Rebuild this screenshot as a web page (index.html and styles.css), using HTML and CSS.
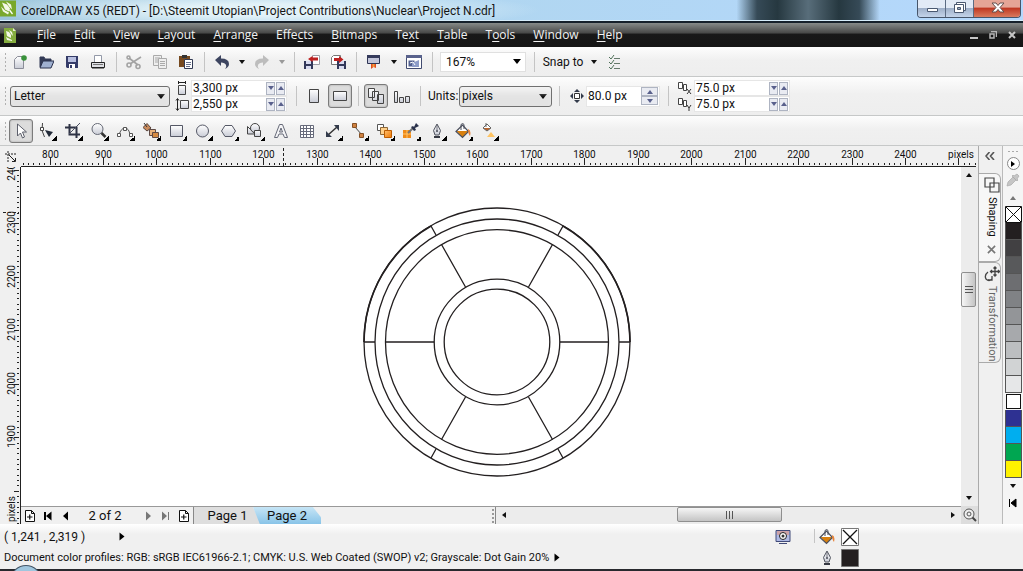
FILE: index.html
```html
<!DOCTYPE html>
<html lang="en">
<head>
<meta charset="utf-8">
<title>CorelDRAW X5</title>
<link rel="stylesheet" href="styles.css">
</head>
<body>
<svg class="defs" aria-hidden="true">
  <defs>
    <linearGradient id="steel" x1="0" y1="0" x2="0" y2="1"><stop offset="0" stop-color="#fff"/><stop offset="1" stop-color="#c9ccd6"/></linearGradient>
    <linearGradient id="orange" x1="0" y1="0" x2="1" y2="1"><stop offset="0" stop-color="#ffc070"/><stop offset="1" stop-color="#f07800"/></linearGradient>
    <symbol id="logo" viewBox="0 0 16 16"><path d="M0 0h16v16H0z" fill="#79a82c"/><path d="M2 2l5 2 3 4-1 3-4-2zM6 1l5 3 1 5-3-3zM1 6l4 4 4 2-1 2-5-3z" fill="#f4f8e8"/><path d="M10 9l3 4-1 1-3-4z" fill="#fff"/></symbol>
    <symbol id="bucket" viewBox="0 0 16 16"><path d="M1 8.500L7.500 2l6 6.500-6 6z" fill="#fff"/><path d="M1.500 8h12l-6 6.500z" fill="#d8800f"/><path d="M1 8.500L7.500 2l6 6.500-6 6z" fill="none" stroke="#4b4f5c" stroke-width="1.200"/><path d="M6 7V1.500q2-2 3 0V6" fill="none" stroke="#4b4f5c"/><path d="M13 6q3.500 1 2 7-2-2-2-7" fill="#e9843a"/></symbol>
    <symbol id="pen" viewBox="0 0 16 16"><path d="M8 1L4.500 7.500 6 12h4l1.500-4.500z" fill="url(#steel)" stroke="#50545f"/><path d="M8 2v5" stroke="#50545f" stroke-width=".8"/><circle cx="8" cy="8" r="1" fill="#454955"/><path d="M5 13h6v2H5z" fill="#363943"/></symbol>
    <symbol id="addpage" viewBox="0 0 10 12"><path d="M.5.500h6l3 3v8h-9zM6.500.500v3h3" fill="#fff" stroke="#111"/><path d="M2 7h5.500M4.750 4.500v5" stroke="#111" stroke-width="1.200"/></symbol>
  </defs>
</svg>

<header class="titlebar">
  <svg class="app-logo" aria-hidden="true"><use href="#logo"/></svg>
  <h1 class="title">CorelDRAW X5 (REDT) - [D:\Steemit Utopian\Project Contributions\Nuclear\Project N.cdr]</h1>
  <div class="window-buttons">
    <button class="wbtn" aria-label="Minimize"><svg viewBox="0 0 28 17"><path d="M9.500 8.500h10v3h-10z" fill="#fff" stroke="#4a5870"/></svg></button>
    <button class="wbtn" aria-label="Restore"><svg viewBox="0 0 28 17"><path d="M10.500 2.500h9v8h-9z" fill="#fff" stroke="#4a5870"/><path d="M8.500 4.500h9v8h-9z" fill="#fff" stroke="#4a5870"/><path d="M11.500 7.500h3v2h-3z" fill="#9aabc2" stroke="#4a5870"/></svg></button>
    <button class="wbtn close" aria-label="Close"><svg viewBox="0 0 46 17"><path d="M18 3h4l2 2.500L26 3h4l-4 4.500 4 4.500h-4l-2-2.500-2 2.500h-4l4-4.500z" fill="#fff" stroke="#64504f"/></svg></button>
  </div>
</header>

<nav class="menubar">
  <svg class="doc-logo" viewBox="0 0 12 15" aria-hidden="true"><path d="M0 0h9l3 3v12H0z" fill="#84ac3e"/><path d="M2 3l3 1 2 3v3L3 8zM5 2l3 2 1 4-2-2zM2 9l6 3v1l-5-1z" fill="#f4f8e8"/><path d="M9 0v3h3z" fill="#e5efcf"/></svg>
  <div class="menus">
    <button><u>F</u>ile</button><button><u>E</u>dit</button><button><u>V</u>iew</button><button><u>L</u>ayout</button><button><u>A</u>rrange</button><button>Effe<u>c</u>ts</button><button><u>B</u>itmaps</button><button>Te<u>x</u>t</button><button><u>T</u>able</button><button>T<u>o</u>ols</button><button><u>W</u>indow</button><button><u>H</u>elp</button>
  </div>
  <div class="doc-buttons">
    <button aria-label="Minimize document"><svg viewBox="0 0 8 8"><path d="M0 6h8v2H0z" fill="#c6c6c6"/></svg></button>
    <button aria-label="Restore document"><svg viewBox="0 0 8 8"><path d="M2 .5h5.500V6M1 3h4v4H1z" fill="none" stroke="#b5b5b5" stroke-width="1.500"/></svg></button>
    <button aria-label="Close document"><svg viewBox="0 0 8 8"><path d="M1 1l6 6M7 1L1 7" stroke="#c6c6c6" stroke-width="2"/></svg></button>
  </div>
</nav>

<div class="bar standard" role="toolbar" aria-label="Standard">
  <i class="grip"></i>
  <button class="tool" aria-label="New"><svg viewBox="0 0 16 16"><path d="M2.500 5.500l3-3h6v12h-9z" fill="url(#steel)" stroke="#8b8d98"/><circle cx="12" cy="4" r="2.800" fill="#38913a"/></svg></button>
  <button class="tool" aria-label="Open"><svg viewBox="0 0 16 16"><path d="M2 13V3h4l1 2h6v3" fill="#333b56" stroke="#333b56"/><path d="M2 14l3-7h11l-3 7z" fill="#9fb0d0" stroke="#29304c"/></svg></button>
  <button class="tool" aria-label="Save"><svg viewBox="0 0 16 16"><path d="M2 2h12v12H3l-1-1z" fill="#343b68"/><path d="M4 3h8v5H4z" fill="#b8bfe0"/><path d="M5 10h6v4H5z" fill="#fff"/><path d="M6 11h2v3H6z" fill="#343b68"/></svg></button>
  <button class="tool" aria-label="Print"><svg viewBox="0 0 16 16"><path d="M4.500 9V1.500h7V9" fill="#fff" stroke="#9399a8"/><path d="M1.500 8.500h13v5h-13z" fill="#dfe0e5" stroke="#222"/><path d="M2 13h12v1.500H2z" fill="#222"/><path d="M3 10.500h10" stroke="#777"/></svg></button>
  <i class="sep"></i>
  <button class="tool" aria-label="Cut"><svg viewBox="0 0 16 16"><g fill="none" stroke="#a3a3a3" stroke-width="1.600"><path d="M3 4l9 7M15 3L4 10"/><circle cx="3" cy="11" r="2"/><circle cx="12" cy="12.500" r="2"/><circle cx="2.500" cy="3.500" r="1.500"/></g></svg></button>
  <button class="tool" aria-label="Copy"><svg viewBox="0 0 16 16"><path d="M1.500 1.500h8v10h-8zM3 4h5M3 6h3M3 8h3" fill="#eee" stroke="#aaa"/><path d="M6.500 4.500h8v10h-8zM8 7.500h5M8 9.500h5M8 11.500h5" fill="#eee" stroke="#aaa"/></svg></button>
  <button class="tool" aria-label="Paste"><svg viewBox="0 0 16 16"><path d="M1 2h11v11H1z" fill="#76491f"/><path d="M4 1h5v3H4z" fill="#333"/><path d="M6.500 5.500h8v9h-8z" fill="#fff" stroke="#333b55"/><path d="M8 8.500h5M8 10.500h5M8 12.500h4" stroke="#68708c"/></svg></button>
  <i class="sep"></i>
  <button class="tool" aria-label="Undo"><svg viewBox="0 0 16 16"><path d="M1 6l6-5v3.500q8 0 8 5.500 0 3-4 5 2-2 1-4-1-2.500-5-2.500V12z" fill="#3d4560"/></svg></button>
  <button class="drop" aria-label="Undo list"></button>
  <button class="tool" aria-label="Redo"><svg viewBox="0 0 16 16"><path d="M15 6L9 1v3.500q-8 0-8 5.500 0 3 4 5-2-2-1-4 1-2.500 5-2.500V12z" fill="#bdbdbd"/></svg></button>
  <button class="drop dim" aria-label="Redo list"></button>
  <i class="sep"></i>
  <button class="tool" aria-label="Import"><svg viewBox="0 0 16 16"><path d="M8.500 1.500h7v9h-7z" fill="#fff" stroke="#a0a0a8"/><path d="M0 7h9v8H0z" fill="#33395a"/><path d="M2 7h5v3H2zM2 12h5v3H2z" fill="#d9dcf0"/><path d="M14 3.500H8.500V2L4 5l4.500 3V6.500H14z" fill="#bd2020"/></svg></button>
  <button class="tool" aria-label="Export"><svg viewBox="0 0 16 16"><path d="M1.500 3.500l2-2h7v9h-9z" fill="#fff" stroke="#777"/><path d="M7 7h9v8H7z" fill="#33395a"/><path d="M9 7h5v3H9zM9 12h5v3H9z" fill="#d9dcf0"/><path d="M4 4h5V2l4.500 3.500L9 9V7H4z" fill="#bd2020"/></svg></button>
  <i class="sep"></i>
  <button class="tool" aria-label="Application launcher"><svg viewBox="0 0 16 16"><path d="M1.500 1.500h12v8h-12z" fill="#c3c6da" stroke="#2e3554"/><path d="M1 1h13v3H1z" fill="#353b5c"/><path d="M5 10h5v4l-2.500-1L5 15z" fill="#e04d20"/><path d="M6.500 10h2v3h-2z" fill="#f5a040"/></svg></button>
  <button class="drop" aria-label="Launcher list"></button>
  <button class="tool" aria-label="Welcome screen"><svg viewBox="0 0 16 16"><path d="M.5 1.500h15v13H.5z" fill="#fff" stroke="#414b70"/><path d="M0 1h16v3H0z" fill="#59628c"/><path d="M2.500 6.500h6v6h-6z" fill="#52608f"/><path d="M6 9l7-3v7H6z" fill="#8d9cc8"/><path d="M4 9l3-1 2 3" fill="none" stroke="#fff"/></svg></button>
  <i class="sep"></i>
  <select class="zoom" aria-label="Zoom level"><option>167%</option></select>
  <i class="sep"></i>
  <button class="snap">Snap to</button>
  <button class="drop" aria-label="Snap list"></button>
  <button class="tool options" aria-label="Options"><svg viewBox="0 0 16 16"><path d="M2 3l2 2 3-4M2 8l2 2 3-4M2 13l2 2 3-4" fill="none" stroke="#4d7057"/><path d="M7 4.500h6M7 9.500h6M7 14.500h6" stroke="#667a6c"/></svg></button>
</div>

<div class="bar property" role="toolbar" aria-label="Property bar">
  <i class="grip"></i>
  <select class="boxed paper" aria-label="Paper type"><option>Letter</option></select>
  <div class="pair size">
    <svg viewBox="0 0 14 14"><path d="M3.500 4.500h7v9h-7z" fill="url(#steel)" stroke="#444"/><path d="M3 1.500h8M3.500 0v3M10.500 0v3" stroke="#222"/></svg>
    <div class="field"><input aria-label="Page width" value="3,300 px"><button class="down" aria-label="Decrease width"></button><button class="up" aria-label="Increase width"></button></div>
    <svg viewBox="0 0 14 14"><path d="M5.500 3.500h8v8h-8z" fill="url(#steel)" stroke="#444"/><path d="M2.500 2v11M1 3.500l1.500-2L4 3.500M1 11.500l1.500 2 1.500-2" fill="none" stroke="#222"/></svg>
    <div class="field"><input aria-label="Page height" value="2,550 px"><button class="down" aria-label="Decrease height"></button><button class="up" aria-label="Increase height"></button></div>
  </div>
  <i class="sep"></i>
  <button class="tool" aria-label="Portrait"><svg viewBox="0 0 16 16"><path d="M3.500 1.500h9v13h-9z" fill="url(#steel)" stroke="#444"/></svg></button>
  <button class="tool on" aria-label="Landscape"><svg viewBox="0 0 16 16"><path d="M1.500 3.500h13v9h-13z" fill="url(#steel)" stroke="#444"/></svg></button>
  <i class="sep"></i>
  <button class="tool on" aria-label="All pages"><svg viewBox="0 0 16 16"><g fill="url(#steel)" stroke="#444"><path d="M.5.500h6v9h-6zM4.500 3.500h6v9h-6zM9.500 6.500h6v9h-6z"/></g></svg></button>
  <button class="tool" aria-label="Current page"><svg viewBox="0 0 16 16"><g fill="url(#steel)" stroke="#444"><path d="M.5 3.500h3v11h-3zM5.500 9.500h4v5h-4zM11.500 8.500h4v6h-4z"/></g></svg></button>
  <i class="sep"></i>
  <label class="units-label" for="units">Units:</label>
  <select class="boxed units" id="units"><option>pixels</option></select>
  <i class="sep"></i>
  <div class="nudge">
    <svg viewBox="0 0 14 14"><path d="M4.500 4.500h5v5h-5z" fill="#fff" stroke="#333"/><path d="M7 0l3 3H4zM7 14l3-3H4zM0 7l3-3v6zM14 7l-3-3v6z" fill="#333b4b"/></svg>
    <div class="field"><input aria-label="Nudge distance" value="80.0 px"><span class="stack"><button class="up" aria-label="Increase nudge"></button><button class="down" aria-label="Decrease nudge"></button></span></div>
  </div>
  <i class="sep"></i>
  <div class="pair duplicate">
    <svg viewBox="0 0 14 14"><path d="M.5 1.500h4v6h-4zM5.500 3.500h3v6h-3z" fill="#fff" stroke="#444"/><path d="M9 8l4 5M13 8l-4 5" stroke="#333"/></svg>
    <div class="field"><input aria-label="Duplicate distance X" value="75.0 px"><button class="down" aria-label="Decrease X"></button><button class="up" aria-label="Increase X"></button></div>
    <svg viewBox="0 0 14 14"><path d="M.5 1.500h4v6h-4zM5.500 3.500h3v6h-3z" fill="#fff" stroke="#444"/><path d="M9 8l2 3 2-3M11 11v3" fill="none" stroke="#333"/></svg>
    <div class="field"><input aria-label="Duplicate distance Y" value="75.0 px"><button class="down" aria-label="Decrease Y"></button><button class="up" aria-label="Increase Y"></button></div>
  </div>
</div>

<div class="bar toolbox" role="toolbar" aria-label="Toolbox">
  <i class="grip"></i>
  <button class="tool on" aria-label="Pick"><svg viewBox="0 0 16 16"><path d="M4.500 1v12l3-3 2 5 2-1-2-5h4z" fill="#fff" stroke="#5d606c"/></svg></button>
  <button class="tool fly" aria-label="Shape"><svg viewBox="0 0 16 16"><path d="M3.500 0q-2 8 2 14" fill="none" stroke="#444"/><path d="M1.500 4.500h3v3h-3z" fill="#fff" stroke="#444"/><path d="M6 7l8 2-4 5z" fill="#222a38"/></svg></button>
  <button class="tool fly" aria-label="Crop"><svg viewBox="0 0 16 16"><path d="M4.500 1v10.500H15M0 4.500h11.500V15" fill="none" stroke="#2e3345" stroke-width="2"/><path d="M15 0L4 11" stroke="#4a4f60"/></svg></button>
  <button class="tool fly" aria-label="Zoom"><svg viewBox="0 0 16 16"><circle cx="6.500" cy="6" r="5.500" fill="url(#steel)" stroke="#666a76"/><path d="M10.500 10l4 4" stroke="#333" stroke-width="2.500"/></svg></button>
  <button class="tool fly" aria-label="Freehand"><svg viewBox="0 0 16 16"><path d="M2 12Q4 5 8 5t5 7" fill="none" stroke="#555"/><path d="M.5 10.500h3v3h-3zM6.500 4.500h3v3h-3zM12.500 10.500h3v3h-3z" fill="#fff" stroke="#555"/></svg></button>
  <button class="tool fly" aria-label="Smart fill"><svg viewBox="0 0 16 16"><path d="M6.500 6.500h6v6h-6z" fill="#e9b27c" stroke="#5f4a45"/><path d="M9.500 9.500h6v5h-6z" fill="#d58a42" stroke="#5f4a45"/><path d="M0 4.500l4-4 4 4.500-4 3z" fill="#c98a5b" stroke="#59443d"/><path d="M1 0l3 4" stroke="#333"/></svg></button>
  <button class="tool fly" aria-label="Rectangle"><svg viewBox="0 0 16 16"><path d="M1.500 2.500h12v11h-12z" fill="url(#steel)" stroke="#555866"/></svg></button>
  <button class="tool fly" aria-label="Ellipse"><svg viewBox="0 0 16 16"><circle cx="7.500" cy="8" r="6" fill="url(#steel)" stroke="#555866"/></svg></button>
  <button class="tool fly" aria-label="Polygon"><svg viewBox="0 0 16 16"><path d="M4 2.500h7L14.500 8 11 13.500H4L.5 8z" fill="url(#steel)" stroke="#555866"/></svg></button>
  <button class="tool fly" aria-label="Basic shapes"><svg viewBox="0 0 16 16"><g fill="url(#steel)" stroke="#444"><path d="M.5 3.500L8 11H.5z"/><circle cx="8" cy="5" r="4.500"/><path d="M7.500 7.500h6v6h-6z"/></g></svg></button>
  <button class="tool" aria-label="Text"><svg viewBox="0 0 16 16"><path d="M6.500 1.500h3l5 13h-3L10 11H6l-1.500 3.500h-3zM8 5L6.500 9h3z" fill="#f4f4f6" stroke="#666a78"/></svg></button>
  <button class="tool" aria-label="Table"><svg viewBox="0 0 16 16"><path d="M1.500 2.500h13v12h-13zM1.500 5.500h13M1.500 8.500h13M1.500 11.500h13M4.500 2.500v12M7.500 2.500v12M11.500 2.500v12" fill="#fff" stroke="#676b7b"/></svg></button>
  <button class="tool fly" aria-label="Dimension"><svg viewBox="0 0 16 16"><path d="M3 12l9-8" stroke="#333" stroke-width="1.500"/><path d="M1 8l6 6H1zM9 2h5v6z" fill="#333b4b"/></svg></button>
  <button class="tool fly" aria-label="Connector"><svg viewBox="0 0 16 16"><path d="M4 4l7 8" stroke="#444"/><path d="M1.500.500h4v4h-4zM8.500 10.500h4v4h-4z" fill="#cf8140" stroke="#855125"/></svg></button>
  <button class="tool fly" aria-label="Blend"><svg viewBox="0 0 16 16"><path d="M.5 1.500h6v6h-6z" fill="#fff" stroke="#555"/><path d="M3.500 4.500h7v7h-7z" fill="#ffd08a" stroke="#8d6737"/><path d="M7.500 7.500h7v7h-7z" fill="url(#orange)" stroke="#bd5c00"/></svg></button>
  <button class="tool fly" aria-label="Eyedropper"><svg viewBox="0 0 16 16"><path d="M0 7h8v8H0z" fill="#ef8b19"/><path d="M4 7v8M0 11h8" stroke="#ffc36b"/><path d="M5 10l5-5" stroke="#777" stroke-width="2"/><path d="M8 4l2-1 1 1 2-4 3 3-4 2 1 2-2 1z" fill="#29304a"/></svg></button>
  <button class="tool fly" aria-label="Outline pen"><svg viewBox="0 0 16 16"><use href="#pen"/></svg></button>
  <button class="tool fly" aria-label="Fill"><svg viewBox="0 0 16 16"><use href="#bucket"/></svg></button>
  <button class="tool fly" aria-label="Interactive fill"><svg viewBox="0 0 16 16"><path d="M2 5l4-4 4 4-4 3z" fill="#fff"/><path d="M2 5h8L6 8z" fill="#b9652e"/><path d="M2 5l4-4 4 4-4 3zM5 4V0" fill="none" stroke="#666"/><path d="M10 9l4 5H6z" fill="#ffc463"/></svg></button>
</div>

<main class="workspace">
  <section class="document">
    <div class="origin"><svg viewBox="0 0 12 12"><path d="M3 0v12M0 3h12" stroke="#222" stroke-dasharray="2 1"/><path d="M4 4l6 6M7 10.500h3.500V7" fill="none" stroke="#222"/></svg></div>
    <svg class="ruler-x" id="ruler-x" aria-label="Horizontal ruler"></svg>
    <svg class="ruler-y" id="ruler-y" aria-label="Vertical ruler"></svg>
    <div class="canvas">
      <svg class="drawing" viewBox="-135 -135 270 270" aria-label="Concentric wheel drawing">
        <g fill="none" stroke="#231f20" stroke-width="1.300">
          <ellipse rx="133" ry="134"/><ellipse rx="122" ry="123"/><ellipse rx="111.500" ry="112.300"/><circle r="62.800"/><circle r="52.800"/>
          <path d="M-133 0h11M122 0h11M-111.500 0h48.700M62.800 0h48.700M-66 -116l5 9M66-116l-5 9M-66 116l5-9M66 116l-5-9M-55.500-97.500l24 42.500M55.500-97.500l-24 42.500M-55.500 97.500l24-42.500M55.500 97.500l-24-42.500"/>
        </g>
        <path d="M-133 0A133 134 0 0 1-66-116M66-116A133 134 0 0 1 133 0" fill="none" stroke="#231f20" stroke-width="1.700"/>
      </svg>
    </div>
    <div class="vscroll">
      <button class="tri n" aria-label="Scroll up"></button>
      <div class="track"><div class="thumb"></div></div>
      <button class="tri s" aria-label="Scroll down"></button>
    </div>
    <div class="pagebar">
      <div class="pages">
        <button class="nav" aria-label="Add page before"><svg viewBox="0 0 10 12"><use href="#addpage"/></svg></button>
        <button class="nav" aria-label="First page"><svg viewBox="0 0 10 12"><path d="M1 2h2v8H1zM8.500 1.500v9L3 6z" fill="#000"/></svg></button>
        <button class="nav" aria-label="Previous page"><svg viewBox="0 0 10 12"><path d="M7 1.500v9L2 6z" fill="#000"/></svg></button>
        <span class="count">2 of 2</span>
        <button class="nav" aria-label="Next page"><svg viewBox="0 0 10 12"><path d="M3 1.500v9L8 6z" fill="#777"/></svg></button>
        <button class="nav" aria-label="Last page"><svg viewBox="0 0 10 12"><path d="M1 1.500v9L6 6zM7 2h1v8H7z" fill="#777"/></svg></button>
        <button class="nav" aria-label="Add page after"><svg viewBox="0 0 10 12"><use href="#addpage"/></svg></button>
        <button class="page first">Page 1</button><button class="page active">Page 2</button>
      </div>
      <i class="splitter"></i>
      <div class="hscroll">
        <button class="tri w" aria-label="Scroll left"></button>
        <div class="track"><div class="thumb"></div></div>
        <button class="tri e" aria-label="Scroll right"></button>
      </div>
    </div>
    <button class="navigator" aria-label="Navigator"><svg viewBox="0 0 14 14"><circle cx="6" cy="6" r="5" fill="#eee" stroke="#555"/><circle cx="6" cy="6" r="2" fill="none" stroke="#555"/><path d="M9.500 9.500L13 13" stroke="#444" stroke-width="2"/></svg></button>
  </section>

  <aside class="docker">
    <button class="collapse" aria-label="Collapse dockers"><svg viewBox="0 0 10 8"><path d="M4.500 0l-3.500 4 3.500 4M9 0L5.500 4 9 8" fill="none" stroke="#555" stroke-width="1.600"/></svg></button>
    <button class="tab shaping"><svg viewBox="0 0 16 16"><path d="M1 1h9v9H1zM6 6h9v9H6z" fill="none" stroke="#444" stroke-width="1.200"/></svg><span>Shaping</span><svg class="x" viewBox="0 0 10 10"><path d="M1 1l8 8M9 1L1 9" stroke="#777" stroke-width="1.800"/></svg></button>
    <button class="tab transformation"><svg viewBox="0 0 16 16"><path d="M4 6q-4 3-2 7 3 3 6 0M8 10v4H4M11 1v9M6.500 5.500h9M9.500 2.500L11 1l1.500 1.500M9.500 8.500L11 10l1.500-1.500M8 4L6.500 5.500 8 7M14 4l1.500 1.500L14 7" fill="none" stroke="#444" stroke-width="1.300"/></svg><span>Transformation</span></button>
  </aside>

  <aside class="palette">
    <i class="dots"></i>
    <button class="menu" aria-label="Palette menu"></button>
    <svg class="dropper" viewBox="0 0 14 14"><path d="M1 13l1-4 5-5 3 3-5 5zM6 3l1-1 1 1 3-2 2 2-2 3 1 1-1 1z" fill="#c6c6c6" stroke="#aaa" stroke-width=".7"/></svg>
    <button class="tri n dim" aria-label="Palette up"></button>
    <button class="sw none" aria-label="No color"><svg viewBox="0 0 17 17"><path d="M.5.500h16v16H.5zM1 1l15 15M16 1L1 16" fill="#fff" stroke="#111"/></svg></button>
    <button class="sw k100" aria-label="Black"></button><button class="sw k90" aria-label="90% black"></button><button class="sw k80" aria-label="80% black"></button><button class="sw k70" aria-label="70% black"></button><button class="sw k60" aria-label="60% black"></button><button class="sw k50" aria-label="50% black"></button><button class="sw k40" aria-label="40% black"></button><button class="sw k30" aria-label="30% black"></button><button class="sw k20" aria-label="20% black"></button><button class="sw k10" aria-label="10% black"></button>
    <button class="sw white" aria-label="White"></button><button class="sw blue" aria-label="Blue"></button><button class="sw cyan" aria-label="Cyan"></button><button class="sw green" aria-label="Green"></button><button class="sw yellow" aria-label="Yellow"></button>
    <button class="tri s" aria-label="Palette down"></button>
    <button class="expand" aria-label="Expand palette"><svg viewBox="0 0 10 10"><path d="M1.500 1v8M8 1v8L3 5z" fill="#000" stroke="#000"/></svg></button>
  </aside>
</main>

<footer class="status">
  <div class="info">
    <p><span class="coords">( 1,241 , 2,319 )</span><button class="tri e" aria-label="Cursor details"></button></p>
    <p><span class="profiles">Document color profiles: RGB: sRGB IEC61966-2.1; CMYK: U.S. Web Coated (SWOP) v2; Grayscale: Dot Gain 20%</span><button class="tri e" aria-label="Profile details"></button></p>
  </div>
  <svg class="proof" viewBox="0 0 16 16"><path d="M1 1.500h14v11H1z" fill="#aeb9e4" stroke="#414a78"/><path d="M2 2h12v4H2z" fill="#cda3a8"/><circle cx="8" cy="7" r="3.500" fill="#fff" stroke="#222"/><circle cx="8" cy="7" r="1.500" fill="#333"/><path d="M4 14.500h8" stroke="#414a78"/></svg>
  <i class="sep"></i>
  <div class="ink">
    <svg viewBox="0 0 16 16"><use href="#bucket"/></svg>
    <svg class="chip" viewBox="0 0 18 18"><path d="M.5.500h17v17H.5z" fill="#fff" stroke="#777"/><path d="M2 2l14 14M16 2L2 16" stroke="#111" stroke-width="1.300"/></svg>
    <svg viewBox="0 0 16 16"><use href="#pen"/></svg>
    <svg class="chip" viewBox="0 0 18 18"><path d="M.5.500h17v17H.5z" fill="#231f20" stroke="#777"/></svg>
  </div>
</footer>
<div class="taskbar"><i class="orb"></i></div>
<script src="rulers.js"></script>
</body>
</html>
```
FILE: styles.css
```css
* { box-sizing: border-box; }
html, body { height: 100%; }
body {
  margin: 0; display: flex; flex-direction: column; overflow: hidden;
  background: #f0f0f0; color: #111;
  font: 12px/16px Roboto, "Noto Sans", sans-serif;
}
button, input, select { font: inherit; color: inherit; margin: 0; padding: 0; border: 0; background: none; border-radius: 0; }
button { display: flex; align-items: center; justify-content: center; flex: none; white-space: nowrap; }
svg { display: block; flex: none; }
p, h1 { margin: 0; font: inherit; }
.defs { position: absolute; width: 0; height: 0; }

.titlebar {
  height: 23px; flex: none; display: flex; align-items: flex-start; border-bottom: 2px solid #15202a;
  background:
    linear-gradient(90deg, transparent 72%, #364a57 74%, #263840 76%, #586d7a 79%, #263840 82%, #364a57 84%, transparent 86%),
    radial-gradient(ellipse 280px 20px at 260px 10px, #e2f2f8 30%, transparent),
    linear-gradient(90deg, #9cc5dc, #b0d6f0 45%, #b5d8fd);
  box-shadow: inset 0 -1px #d6edfa;
}
.app-logo { width: 16px; height: 17px; }
.title { margin-left: 5px; font: 12px/22px Roboto, "Noto Sans", sans-serif; color: #151515; white-space: nowrap; }
.window-buttons { margin-left: auto; margin-right: 2px; display: flex; height: 18px; border: 1px solid #46556a; border-top: 0; border-radius: 0 0 4px 4px; overflow: hidden; }
.wbtn { width: 28px; height: 17px; background: linear-gradient(#e2eaf6 45%, #9fb0c9 50%, #c4d4ea); border-right: 1px solid #5b6b83; }
.wbtn svg { width: 28px; height: 17px; }
.wbtn.close { width: 46px; border: 0; background: linear-gradient(#e5a596 40%, #c03a24 50%, #d97a5e); }
.wbtn.close svg { width: 46px; }

.menubar { height: 24px; flex: none; display: flex; align-items: center; background: linear-gradient(#868a88, #4a4b4a 40%, #181818 48%, #161616); color: #f2f2f2; }
.doc-logo { width: 12px; height: 15px; margin-left: 4px; }
.menus { display: flex; gap: 18px; margin-left: 21px; font: 12px/18px "Open Sans", "Noto Sans", sans-serif; }
.menus u { text-underline-offset: 2px; }
.doc-buttons { margin-left: auto; margin-right: 7px; display: flex; gap: 11px; }
.doc-buttons svg { width: 8px; height: 8px; }

.bar { flex: none; display: flex; align-items: center; background: linear-gradient(#fdfdfd, #f0f0f0 45%, #eee); border-bottom: 1px solid #c6c8c8; }
.standard, .toolbox { height: 30px; }
.property { height: 39px; }
.grip { width: 3px; height: 20px; margin: 0 0 0 4px; flex: none; background: radial-gradient(circle, #b0b0b0 1px, transparent 1px) 0 0 / 3px 4px; }
.sep { width: 10px; height: 20px; flex: none; background: linear-gradient(#c4c4c4, #c4c4c4) center / 1px 100% no-repeat; }
.tool { width: 26px; height: 24px; position: relative; }
.tool svg { width: 16px; height: 16px; }
.tool.on { width: 24px; margin: 0 1px; border: 1px solid #7b7b7b; border-radius: 3px; background: #dcdcdc; box-shadow: inset 0 0 2px #999; }
.fly::after { content: ""; position: absolute; right: 3px; bottom: 2px; width: 5px; height: 5px; background: linear-gradient(135deg, transparent 50%, #000 50%); }
.drop { width: 14px; height: 20px; }
.drop::before, .tri::before { content: ""; border: 3px solid transparent; border-bottom: 0; border-top: 4px solid #111; }
.drop.dim::before { border-top-color: #999; }

select { appearance: none; background: url("data:image/svg+xml,%3Csvg xmlns='http://www.w3.org/2000/svg' width='8' height='5'%3E%3Cpath d='M0 0h8L4 5z'/%3E%3C/svg%3E") right 4px center no-repeat #fff; }
.zoom { width: 86px; height: 20px; border: 1px solid #e0e0e0; margin: 0 3px; padding-left: 5px; }
.snap { margin-left: 5px; width: 38px; }
.snap + .drop { margin-left: 5px; }
.options { margin-left: 1px; }

.boxed { height: 21px; border: 1px solid #707070; border-radius: 3px; padding-left: 3px; background-color: #e3e3e3; box-shadow: inset 0 8px 6px -3px #f3f3f3; }
.paper { width: 160px; margin-left: 3px; }
.pair { display: grid; grid-template-columns: 14px 96px; gap: 0 2px; align-items: center; }
.pair svg { width: 14px; height: 14px; }
.size { margin: 0 4px 0 5px; }
.duplicate { margin-left: 5px; }
.field { display: flex; align-items: center; gap: 1px; height: 16px; background: #fff; border: 1px solid #e6e6e6; padding-right: 1px; }
.field input { flex: 1; min-width: 0; width: 0; height: 14px; padding-left: 1px; outline: 0; }
.field button { width: 9px; height: 13px; border: 1px solid #aeb4c2; background: #e9ebf2; }
.field button::before { content: ""; border: 3px solid transparent; }
.field .down::before { border-bottom: 0; border-top: 4px solid #59608c; }
.field .up::before { border-top: 0; border-bottom: 4px solid #59608c; }
.units-label { margin-left: 3px; width: 31px; white-space: nowrap; }
.units { width: 93px; padding-left: 2px; }
.units + .sep { margin-left: 2px; }
.nudge { display: flex; align-items: center; gap: 2px; margin: 0 3px 0 6px; }
.nudge svg { width: 14px; height: 14px; }
.nudge .field { width: 74px; height: 21px; }
.stack { display: flex; flex-direction: column; }
.nudge .field button { width: 17px; height: 9px; }

.toolbox .grip { margin-right: 1px; }
.workspace { flex: 1; min-height: 0; display: flex; }
.document { flex: 1; min-width: 0; display: grid; grid-template: 21px minmax(0, 1fr) 18px / 21px minmax(0, 1fr) 17px; }
.origin { display: grid; place-items: center; }
.origin svg { width: 12px; height: 12px; }
.ruler-x { grid-column: 2 / 4; width: 100%; height: 21px; }
.ruler-y { grid-row: 2 / 4; grid-column: 1; width: 21px; height: 100%; }
.ruler-x text, .ruler-y text { font: 10px Roboto, "Noto Sans", sans-serif; text-anchor: middle; fill: #111; }
.canvas { background: #fff; display: flex; align-items: center; justify-content: center; padding: 11px 0 0 11px; overflow: hidden; min-width: 0; }
.drawing { width: 270px; height: 270px; }

.tri { width: 16px; height: 16px; }
.tri.n::before { transform: rotate(180deg); }
.tri.w::before { transform: rotate(90deg); }
.tri.e::before { transform: rotate(-90deg); }
.tri.dim::before { border-top-color: #777; }
.vscroll { display: flex; flex-direction: column; background: #ececec; }
.track { flex: 1; display: flex; }
.vscroll .track { flex-direction: column; }
.thumb { border: 1px solid #8f8f8f; border-radius: 2px; }
.vscroll .thumb { width: 15px; height: 35px; margin-top: 89px; background: repeating-linear-gradient(#555 0 1px, transparent 1px 3px) center / 8px 7px no-repeat, linear-gradient(90deg, #f6f6f6, #c4c4c4); }
.hscroll .thumb { width: 105px; height: 15px; margin-left: 38%; background: repeating-linear-gradient(90deg, #555 0 1px, transparent 1px 3px) center / 7px 8px no-repeat, linear-gradient(#f6f6f6, #c4c4c4); }
.pagebar { display: flex; min-width: 0; border-top: 1px solid #999; }
.pages { width: 50%; display: flex; align-items: center; }
.nav { width: 18px; height: 16px; }
.nav svg { width: 10px; height: 12px; }
.count { width: 60px; text-align: center; font-size: 13px; margin-right: 4px; }
.page { width: 68px; height: 17px; font-size: 13px; background: #dedede; }
.page.first { border-left: 1px solid #888; clip-path: polygon(0 0, 88% 0, 100% 100%, 0 100%); }
.page.active { margin-left: -8px; background: linear-gradient(#c6e5f6, #89c4e8); clip-path: polygon(0 0, 88% 0, 100% 60%, 100% 100%, 10% 100%); }
.splitter { width: 5px; border-right: 1px solid #888; background: radial-gradient(circle, #999 1px, transparent 1px) 0 1px / 4px 4px; }
.hscroll { flex: 1; display: flex; background: #ececec; }
.navigator { background: #ddd; }
.navigator svg { width: 14px; height: 14px; }

.docker { width: 25px; flex: none; border-left: 1px solid #aaa; border-right: 1px solid #bbb; display: flex; flex-direction: column; align-items: flex-start; }
.collapse { width: 22px; height: 20px; }
.collapse svg { width: 10px; height: 8px; }
.tab { width: 22px; flex-direction: column; justify-content: flex-start; gap: 4px; padding-top: 3px; border: 1px solid #aaa; border-left: 0; border-radius: 0 6px 6px 0; font-size: 11px; }
.tab svg { width: 16px; height: 16px; margin-left: 4px; }
.tab span { writing-mode: vertical-rl; margin-left: 4px; }
.tab svg.x { width: 9px; height: 9px; margin-top: 4px; }
.shaping { height: 89px; margin-top: 7px; background: #f7f7f7; }
.transformation { height: 101px; color: #666; }

.palette { width: 20px; flex: none; display: flex; flex-direction: column; align-items: center; background: #f5f5f5; }
.dots { width: 12px; height: 3px; margin: 4px 0; background: radial-gradient(circle, #aaa 1px, transparent 1px) 0 0 / 4px 3px; }
.menu { width: 13px; height: 13px; border: 1px solid #888; border-radius: 50%; background: #fff; }
.menu::before { content: ""; border: 3px solid transparent; border-right: 0; border-left: 4px solid #000; }
.dropper { width: 14px; height: 14px; margin: 3px 0; }
.palette .tri { height: 16px; }
.sw { width: 17px; height: 17px; border: 1px solid #555; border-top-width: 0; }
.none { border: 0; }
.none svg { width: 17px; height: 17px; }
.k100 { background: #231f20; } .k90 { background: #414042; } .k80 { background: #58595b; } .k70 { background: #6d6e71; } .k60 { background: #808285; }
.k50 { background: #939598; } .k40 { background: #a7a9ac; } .k30 { background: #bcbec0; } .k20 { background: #d1d3d4; } .k10 { background: #e6e7e8; }
.white { background: #fff; width: 15px; height: 15px; margin: 1px; border-width: 1px; border-color: #111; }
.blue { background: #2e3192; } .cyan { background: #00aeef; } .green { background: #00a651; } .yellow { background: #fff200; }
.expand { width: 17px; height: 18px; }
.expand svg { width: 10px; height: 10px; }

.status { height: 45px; flex: none; display: flex; align-items: flex-start; background: linear-gradient(#fff, #f0f0f0 10px); padding: 2px 164px 0 4px; }
.info { flex: 1; min-width: 0; }
.info p { display: flex; align-items: center; height: 21px; white-space: nowrap; }
.coords { width: 110px; }
.profiles { font-size: 11px; }
.status .tri::before { border: 4px solid transparent; border-top: 5px solid #000; border-bottom: 0; }
.proof { width: 16px; height: 16px; margin-top: 3px; }
.status .sep { height: 14px; margin: 3px 0 0 18px; }
.ink { display: grid; grid-template-columns: 16px 18px; gap: 3px 6px; align-items: center; padding-top: 2px; }
.ink svg { width: 16px; height: 16px; }
.ink .chip { width: 18px; height: 18px; }
.taskbar { height: 2px; flex: none; background: #28292e; position: relative; }
.orb { position: absolute; left: 11px; bottom: -22px; width: 30px; height: 28px; border-radius: 50%; border: 1px solid #456; background: #9fc6de; }
```
FILE: rulers.js
```js
const NS = "http://www.w3.org/2000/svg";
const STEP = 5.347;

function add(svg, name, attrs, text) {
  const node = document.createElementNS(NS, name);
  for (const key in attrs) node.setAttribute(key, attrs[key]);
  if (text) node.textContent = text;
  svg.appendChild(node);
}

function horizontal() {
  const svg = document.getElementById("ruler-x");
  let d = "M0 20.5H955";
  for (let i = -5; i <= 173; i++) {
    const x = Math.round(28.5 + i * STEP) + 0.5;
    if (x < 1) continue;
    const length = i % 10 === 0 ? 7 : 2;
    d += "M" + x + " 19v-" + length;
    if (i % 10 === 0 && i < 170) add(svg, "text", { x: x, y: 12 }, String(800 + i * 10));
  }
  add(svg, "path", { d: d, stroke: "#222", fill: "none" });
  add(svg, "path", { d: "M262.5 2v18", stroke: "#222", "stroke-dasharray": "3 2" });
  add(svg, "text", { x: 940, y: 12 }, "pixels");
}

function vertical() {
  const svg = document.getElementById("ruler-y");
  let d = "M20.500 0V357";
  for (let i = 0; i <= 66; i++) {
    const y = Math.round(3 + i * STEP) + 0.5;
    const length = i % 10 === 0 ? 5 : 2;
    d += "M19 " + y + "h-" + length;
    if (i % 10 === 0 && i < 60) {
      add(svg, "text", { transform: "translate(15 " + (y - 1) + ") rotate(-90)" }, String(2400 - i * 10));
    }
  }
  add(svg, "path", { d: d, stroke: "#222", fill: "none" });
  add(svg, "path", { d: "M3 45.500h16", stroke: "#222", "stroke-dasharray": "3 2" });
  add(svg, "text", { transform: "translate(15 342) rotate(-90)" }, "pixels");
}

horizontal();
vertical();
```
